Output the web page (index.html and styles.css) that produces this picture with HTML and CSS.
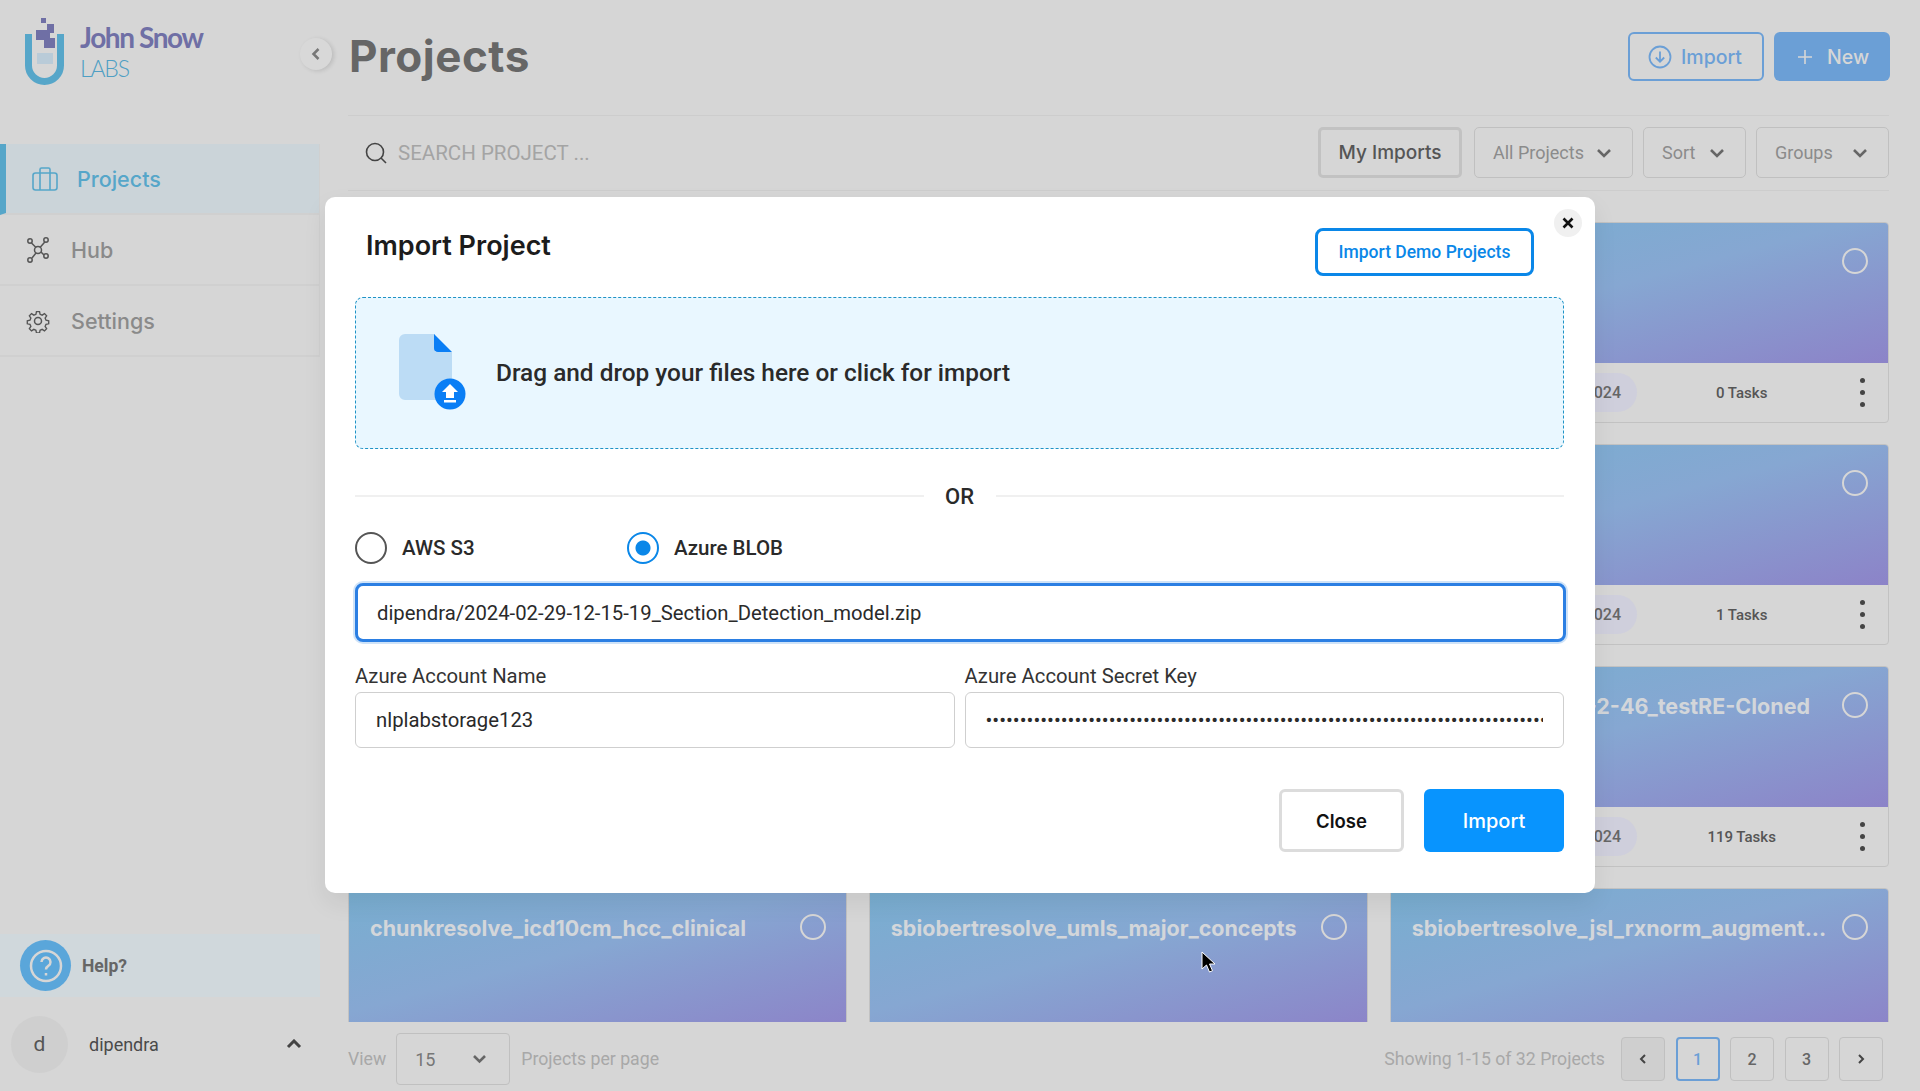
FILE: index.html
```html
<!DOCTYPE html>
<html lang="en">
<head>
<meta charset="utf-8">
<title>Projects</title>
<link rel="stylesheet" href="styles.css">
</head>
<body>
<div class="app">
  <aside class="sidebar">
    <div class="brand">
      <svg class="brand-mark" width="42" height="70" viewBox="0 0 42 70">
        <path d="M4.500 17v31.500a16 16 0 0 0 32 0V17" fill="none" stroke="#56a6c9" stroke-width="7"/>
        <path d="M23 7h7v9h-4v5h5v10H20v-8h-8V13h11z" fill="#6f6fa5"/>
        <rect x="17" y="1" width="5" height="5" fill="#6f6fa5"/>
        <rect x="13" y="36" width="16" height="11" fill="#b9cbd8"/>
      </svg>
      <div class="brand-text">
        <div class="brand-name">John Snow</div>
        <div class="brand-sub">LABS</div>
      </div>
    </div>
    <nav class="nav">
      <a class="nav-item nav-item-active">
        <svg width="26" height="24" viewBox="0 0 26 24" fill="none" stroke="#56a6c9" stroke-width="1.6"><rect x="1" y="6" width="24" height="17" rx="2.5"/><path d="M8 6V2.5A1.5 1.5 0 0 1 9.500 1h7A1.500 1.500 0 0 1 18 2.500V6M8 6v17M18 6v17"/></svg>
        <span>Projects</span>
      </a>
      <a class="nav-item">
        <svg width="24" height="26" viewBox="0 0 24 26" fill="none" stroke="#555" stroke-width="1.500"><circle cx="12" cy="13" r="3.500"/><circle cx="4" cy="4" r="2.200"/><circle cx="20" cy="3" r="2.200"/><circle cx="4" cy="23" r="2.200"/><circle cx="20" cy="19" r="2.200"/><path d="M5.500 6 10 10.500M18.800 5 14 10.500M6 21l4-5M18 18l-3-3"/></svg>
        <span>Hub</span>
      </a>
      <a class="nav-item">
        <svg width="24" height="24" viewBox="0 0 24 24" fill="none" stroke="#555" stroke-width="1.500"><circle cx="12" cy="12" r="3.500"/><path d="M10.300 1.500h3.400l.6 3 2.300 1 2.600-1.700 2.400 2.400-1.700 2.600 1 2.300 3 .6v3.400l-3 .6-1 2.300 1.700 2.600-2.400 2.400-2.600-1.700-2.300 1-.6 3h-3.400l-.6-3-2.300-1-2.600 1.700-2.400-2.400 1.700-2.600-1-2.300-3-.6v-3.400l3-.6 1-2.300-1.700-2.600 2.400-2.400 2.600 1.700 2.300-1z" transform="translate(1.200 1.200) scale(.9)"/></svg>
        <span>Settings</span>
      </a>
    </nav>
    <div class="help">
      <span class="help-badge">
        <svg width="36" height="36" viewBox="0 0 36 36" fill="none" stroke="#d6d6d6" stroke-width="2.500"><circle cx="18" cy="18" r="15"/><path d="M13.500 14a4.500 4.500 0 1 1 6.800 3.900c-1.500.9-2.300 1.800-2.300 3.600"/><path d="M18 25v2.500"/></svg>
      </span>
      <span class="help-label">Help?</span>
    </div>
    <div class="user">
      <span class="avatar">d</span>
      <span class="user-name">dipendra</span>
      <svg class="user-chevron" width="16" height="10" viewBox="0 0 16 10" fill="none" stroke="#444" stroke-width="3"><path d="M2 8l6-6 6 6"/></svg>
    </div>
  </aside>

  <main class="main">
    <header class="topbar">
      <span class="collapse">
        <svg width="10" height="14" viewBox="0 0 10 14" fill="none" stroke="#777" stroke-width="2.500"><path d="M7.500 2 2.500 7l5 5"/></svg>
      </span>
      <h1 class="page-title">Projects</h1>
      <div class="topbar-actions">
        <button class="btn-outline">
          <svg width="24" height="24" viewBox="0 0 24 24" fill="none" stroke="#6b9fd6" stroke-width="1.800"><circle cx="12" cy="12" r="10.500"/><path d="M12 6.500v10M7.800 12.500l4.200 4.200 4.200-4.200"/></svg>
          Import
        </button>
        <button class="btn-solid">
          <svg width="16" height="16" viewBox="0 0 16 16" fill="none" stroke="#d6d6d6" stroke-width="1.600"><path d="M8 1v14M1 8h14"/></svg>
          New
        </button>
      </div>
    </header>

    <div class="toolbar">
      <svg class="search-icon" width="22" height="22" viewBox="0 0 22 22" fill="none" stroke="#444" stroke-width="1.600"><circle cx="10" cy="10" r="8.500"/><path d="M16 16l5 5"/></svg>
      <span class="search-text">SEARCH PROJECT ...</span>
      <button class="btn-filter btn-filter-strong">My Imports</button>
      <button class="btn-filter btn-all">All Projects <svg width="16" height="10" viewBox="0 0 16 10" fill="none" stroke="#666" stroke-width="2.600"><path d="M2 2l6 6 6-6"/></svg></button>
      <button class="btn-filter btn-sort">Sort <svg width="16" height="10" viewBox="0 0 16 10" fill="none" stroke="#666" stroke-width="2.600"><path d="M2 2l6 6 6-6"/></svg></button>
      <button class="btn-filter btn-groups">Groups <svg width="16" height="10" viewBox="0 0 16 10" fill="none" stroke="#666" stroke-width="2.600"><path d="M2 2l6 6 6-6"/></svg></button>
    </div>

    <div class="grid-clip">
      <div class="grid">
        <article class="card"><div class="card-top"></div><div class="card-foot"></div></article>
        <article class="card"><div class="card-top"></div><div class="card-foot"></div></article>
        <article class="card">
          <div class="card-top"><span class="ring"></span></div>
          <div class="card-foot"><span class="pill">2024</span><span class="tasks">0 Tasks</span><span class="kebab"><i></i><i></i><i></i></span></div>
        </article>
        <article class="card"><div class="card-top"></div><div class="card-foot"></div></article>
        <article class="card"><div class="card-top"></div><div class="card-foot"></div></article>
        <article class="card">
          <div class="card-top"><span class="ring"></span></div>
          <div class="card-foot"><span class="pill">2024</span><span class="tasks">1 Tasks</span><span class="kebab"><i></i><i></i><i></i></span></div>
        </article>
        <article class="card"><div class="card-top"></div><div class="card-foot"></div></article>
        <article class="card"><div class="card-top"></div><div class="card-foot"></div></article>
        <article class="card">
          <div class="card-top"><span class="card-title card-title-right">-2-46_testRE-Cloned</span><span class="ring"></span></div>
          <div class="card-foot"><span class="pill">2024</span><span class="tasks">119 Tasks</span><span class="kebab"><i></i><i></i><i></i></span></div>
        </article>
        <article class="card">
          <div class="card-top"><span class="card-title">chunkresolve_icd10cm_hcc_clinical</span><span class="ring"></span></div>
        </article>
        <article class="card">
          <div class="card-top"><span class="card-title">sbiobertresolve_umls_major_concepts</span><span class="ring"></span></div>
        </article>
        <article class="card">
          <div class="card-top"><span class="card-title">sbiobertresolve_jsl_rxnorm_augment...</span><span class="ring"></span></div>
        </article>
      </div>
    </div>

    <footer class="pager-bar">
      <span class="muted">View</span>
      <span class="per-page">15 <svg width="15" height="10" viewBox="0 0 15 10" fill="none" stroke="#666" stroke-width="2.600"><path d="M2 2l5.500 5.500L13 2"/></svg></span>
      <span class="muted">Projects per page</span>
      <span class="muted showing">Showing 1-15 of 32 Projects</span>
      <span class="page-btn page-btn-off"><svg width="8" height="12" viewBox="0 0 8 12" fill="none" stroke="#444" stroke-width="2"><path d="M6 2 2 6l4 4"/></svg></span>
      <span class="page-btn page-btn-current">1</span>
      <span class="page-btn">2</span>
      <span class="page-btn">3</span>
      <span class="page-btn"><svg width="8" height="12" viewBox="0 0 8 12" fill="none" stroke="#444" stroke-width="2"><path d="M2 2l4 4-4 4"/></svg></span>
    </footer>
  </main>
</div>

<section class="modal">
  <button class="modal-x">
    <svg width="12" height="12" viewBox="0 0 12 12" fill="none" stroke="#111" stroke-width="2.600"><path d="M1.500 1.500l9 9M10.500 1.500l-9 9"/></svg>
  </button>
  <div class="modal-head">
    <h2 class="modal-title">Import Project</h2>
    <button class="btn-demo">Import Demo Projects</button>
  </div>
  <div class="dropzone">
    <svg class="file-icon" width="68" height="82" viewBox="0 0 68 82">
      <path d="M6 0h30v18h17v48H6a6 6 0 0 1-6-6V6a6 6 0 0 1 6-6z" fill="#bcdcf5"/>
      <path d="M35 0l18 18H39a4 4 0 0 1-4-4z" fill="#0a7ef5"/>
      <circle cx="51" cy="60" r="15.500" fill="#0a7ef5"/>
      <path d="M51 50l8 8h-4v6h-8v-6h-4z" fill="#fff"/>
      <rect x="45" y="66" width="12" height="2.500" fill="#fff"/>
    </svg>
    <span class="drop-text">Drag and drop your files here or click for import</span>
  </div>
  <div class="or-row"><span class="or-line"></span><span class="or-text">OR</span><span class="or-line"></span></div>
  <div class="radios">
    <label class="radio radio-aws"><span class="radio-dot"></span>AWS S3</label>
    <label class="radio"><span class="radio-dot radio-dot-on"></span>Azure BLOB</label>
  </div>
  <input class="field field-focus" type="text" readonly value="dipendra/2024-02-29-12-15-19_Section_Detection_model.zip">
  <div class="field-row">
    <div class="field-col">
      <label class="field-label">Azure Account Name</label>
      <input class="field" type="text" readonly value="nlplabstorage123">
    </div>
    <div class="field-col">
      <label class="field-label">Azure Account Secret Key</label>
      <input class="field" type="password" readonly value="xxxxxxxxxxxxxxxxxxxxxxxxxxxxxxxxxxxxxxxxxxxxxxxxxxxxxxxxxxxxxxxxxxxxxxxxxxxxxxxxxxxxxxxxxxxxxxxxxxxx">
    </div>
  </div>
  <div class="modal-actions">
    <button class="btn-close">Close</button>
    <button class="btn-import">Import</button>
  </div>
</section>

<svg class="cursor" width="16" height="23" viewBox="0 0 16 23"><path d="M1 1v17l4.500-4 3 7 3-1.300-3-6.700H14z" fill="#000" stroke="#fff" stroke-width="1"/></svg>
</body>
</html>
```

FILE: styles.css
```css
* { box-sizing: border-box; }
html, body { margin: 0; height: 100%; overflow: hidden; }
body { background: #d6d6d6; font-family: Roboto, "Liberation Sans", sans-serif; color: #444; }
button { font-family: inherit; cursor: pointer; }
h1, h2 { margin: 0; }

.app { display: flex; height: 1091px; }

/* Sidebar */
.sidebar { width: 320px; flex: none; display: flex; flex-direction: column; }
.brand { height: 144px; padding: 17px 0 0 24px; display: flex; align-items: flex-start; gap: 14px; }
.brand-mark { flex: none; }
.brand-text { padding-top: 4px; }
.brand-name { font-family: Lato, sans-serif; font-weight: 700; font-size: 28px; line-height: 32px; letter-spacing: -1.400px; color: #6f6fa5; }
.brand-sub { font-family: Lato, sans-serif; font-weight: 300; font-size: 23px; line-height: 30px; letter-spacing: -1.200px; color: #4f9fc4; }
.nav { border-right: 1px solid #d0d0d0; }
.nav-item { display: flex; align-items: center; gap: 21px; height: 71px; padding-left: 26px; border-bottom: 2px solid #d0d0d0; font-family: Inter, sans-serif; font-weight: 500; font-size: 21.500px; color: #8a8a8a; }
.nav-item-active { gap: 19px; background: #cbd4d9; border-left: 6px solid #56a6c9; color: #56a6c9; }
.help { margin-top: auto; height: 63px; background: #d0d8dc; display: flex; align-items: center; gap: 11px; padding-left: 20px; }
.help-badge { width: 51px; height: 51px; border-radius: 50%; background: #5aa6da; display: flex; align-items: center; justify-content: center; }
.help-label { font-weight: 700; font-size: 17.500px; color: #666; }
.user { height: 94px; display: flex; align-items: center; padding: 0 17px 0 11px; }
.avatar { width: 57px; height: 57px; border-radius: 50%; background: #cfcfcf; display: flex; align-items: center; justify-content: center; font-size: 21px; color: #555; }
.user-name { margin-left: 21px; font-size: 18px; color: #4a4a4a; }
.user-chevron { margin-left: auto; margin-right: 1px; }

/* Main */
.main { flex: 1; min-width: 0; display: flex; flex-direction: column; padding: 0 31px 0 28px; }
.topbar { height: 116px; flex: none; display: flex; align-items: flex-start; border-bottom: 1px solid #cdcdcd; position: relative; }
.collapse { position: absolute; left: -48px; top: 38px; width: 32px; height: 32px; border-radius: 50%; background: #d8d8d8; box-shadow: 2px 1px 4px rgba(0,0,0,.12); display: flex; align-items: center; justify-content: center; }
.page-title { margin: 30px 0 0 1px; font-family: Inter, sans-serif; font-weight: 700; font-size: 44px; line-height: 52px; letter-spacing: .5px; color: #666; }
.topbar-actions { margin: 32px -1px 0 auto; display: flex; gap: 10px; }
.btn-outline, .btn-solid { height: 49px; border-radius: 6px; display: flex; align-items: center; font-family: Inter, sans-serif; font-weight: 500; font-size: 19.500px; }
.btn-outline { width: 136px; gap: 9px; padding: 0 0 0 18px; background: transparent; border: 2.500px solid #6b9fd6; color: #6b9fd6; }
.btn-solid { width: 116px; gap: 14px; padding: 0 0 0 23px; background: #6b9fd6; border: 0; color: #d6d6d6; }

.toolbar { height: 75px; flex: none; display: flex; align-items: center; border-bottom: 1px solid #cdcdcd; padding: 0 0 1px 0; }
.search-icon { margin-left: 17px; flex: none; }
.search-text { margin-left: 11px; margin-right: auto; font-size: 20.500px; color: #a4a4a4; }
.btn-filter { height: 51px; border-radius: 5px; background: transparent; border: 1.500px solid #c0c0c0; display: flex; align-items: center; justify-content: space-between; font-size: 18px; color: #8b8b8b; padding: 0 20px 0 18px; margin-left: 11px; }
.btn-filter-strong { width: 144px; margin-left: 0; padding: 0; justify-content: center; border: 3px solid #c2c2c2; font-family: Inter, sans-serif; font-weight: 500; font-size: 19px; color: #555; }
.btn-all { width: 159px; margin-left: 12px; }
.btn-sort { width: 103px; margin-left: 10px; }
.btn-groups { width: 133px; margin-left: 10px; }

.grid-clip { flex: 1; min-height: 0; overflow: hidden; padding-top: 31px; }
.grid { display: grid; grid-template-columns: repeat(3, 1fr); gap: 21px 21.500px; }
.card { height: 201px; display: flex; flex-direction: column; border: 1.500px solid #c2c2c2; border-radius: 4px; overflow: hidden; }
.card-top { height: 140px; flex: none; background: linear-gradient(165deg, #78aed0 0%, #86a7d2 45%, #8c83c8 100%); display: flex; align-items: flex-start; padding: 26px 20px 0 21px; }
.card-title { font-family: Inter, sans-serif; font-weight: 700; font-size: 21.500px; line-height: 26px; color: #d3d6da; white-space: nowrap; }
.card-title-right { margin-left: auto; margin-right: 32px; }
.ring { width: 26px; height: 26px; margin: -1px 0 0 auto; border-radius: 50%; border: 2px solid #d6d6d6; flex: none; }
.card-title-right + .ring { margin-left: 0; }
.card-foot { flex: 1; display: flex; align-items: center; padding: 0 23px 0 0; position: relative; }
.pill { height: 39px; padding: 0 16px; border-radius: 20px; background: #cfcfdc; display: flex; align-items: center; font-size: 16px; font-weight: 500; color: #666; position: absolute; right: 251px; }
.tasks { width: 140px; margin-left: 281px; text-align: center; font-size: 15px; font-weight: 500; color: #555; }
.kebab { margin-left: auto; display: flex; flex-direction: column; gap: 7px; }
.kebab i { display: block; width: 5px; height: 5px; border-radius: 50%; background: #444; }

.pager-bar { height: 69px; flex: none; display: flex; align-items: center; padding: 0 6px 0 0; }
.muted { font-size: 17.700px; color: #a8a8a8; }
.per-page { width: 114px; height: 52px; margin: 5px 11px 0 10px; border: 1.500px solid #c0c0c0; border-radius: 4px; display: flex; align-items: center; justify-content: space-between; padding: 0 22px 0 18px; font-size: 18px; color: #777; }
.pager-bar .muted { margin-top: 4px; }
.showing { margin-left: auto; margin-right: 16px; }
.page-btn { width: 44px; height: 44px; margin: 5px 0 0 10.500px; border: 1.500px solid #c0c0c0; border-radius: 4px; display: flex; align-items: center; justify-content: center; font-size: 16px; font-weight: 500; color: #666; }
.page-btn-off { background: #cfcfcf; margin-left: 0; }
.page-btn-current { border: 2px solid #6b9fd6; color: #6b9fd6; }

/* Modal */
.modal { position: absolute; left: 325px; top: 197px; width: 1270px; height: 696px; padding: 0 31px 0 30px; background: #fff; border-radius: 10px; box-shadow: 0 10px 24px rgba(0,0,0,.07); color: #222; }
.modal-x { position: absolute; right: 13px; top: 12px; width: 28px; height: 28px; padding: 0; border: 0; border-radius: 50%; background: #f0f0f0; display: flex; align-items: center; justify-content: center; }
.modal-head { height: 100px; display: flex; align-items: flex-start; justify-content: space-between; padding: 0 30px 0 11px; }
.modal-title { margin-top: 31px; font-family: Inter, sans-serif; font-weight: 600; font-size: 27px; line-height: 36px; color: #1c1c1c; }
.btn-demo { margin-top: 31px; width: 219px; height: 48px; background: #fff; border: 3px solid #0a87e8; border-radius: 8px; font-size: 17.500px; font-weight: 500; color: #0a87e8; }
.dropzone { height: 152px; display: flex; align-items: center; padding-left: 43px; background: #e9f7ff; border: 1px dashed #1f93c6; border-radius: 8px; }
.file-icon { flex: none; margin-top: 4px; }
.drop-text { margin: 0 0 2px 29px; font-size: 24.400px; font-weight: 500; color: #2a2a2a; }
.or-row { margin-top: 32px; height: 30px; display: flex; align-items: center; }
.or-line { flex: 1; height: 2px; background: #f0f0f0; }
.or-text { width: 72px; text-align: center; font-size: 22px; font-weight: 500; color: #2a2a2a; }
.radios { margin-top: 21px; height: 32px; display: flex; }
.radio { display: flex; align-items: center; gap: 15px; font-size: 20.500px; font-weight: 500; color: #2a2a2a; }
.radio-aws { width: 272px; }
.radio-dot { width: 32px; height: 32px; flex: none; border-radius: 50%; border: 2.500px solid #555; }
.radio-dot-on { border-color: #0a87e8; background: radial-gradient(circle, #0a87e8 0 7px, #fff 8px); }
.field { display: block; width: 100%; height: 56px; padding: 0 20px; border: 1.500px solid #cfcfcf; border-radius: 6px; background: #fff; font-family: Roboto, sans-serif; font-size: 20.300px; color: #2a2a2a; outline: none; }
.field-focus { width: calc(100% + 2px); height: 59px; margin-top: 19px; border: 3px solid #2b7fe3; border-radius: 8px; box-shadow: 0 0 0 2px #cfe3f8; padding: 0 19px; }
.field-row { margin-top: 22px; display: grid; grid-template-columns: 1fr 1fr; gap: 10px; }
.field-label { display: block; font-size: 20.300px; line-height: 24px; margin-bottom: 4px; color: #333; }
.modal-actions { margin-top: 41px; display: flex; justify-content: flex-end; gap: 20px; }
.btn-close, .btn-import { height: 63px; border-radius: 6px; font-family: Inter, sans-serif; font-weight: 600; font-size: 18.500px; }
.btn-close { width: 125px; background: #fff; border: 3px solid #dcdcdc; color: #111; }
.btn-import { width: 140px; background: #0894fe; border: 0; color: #fff; font-size: 20px; font-weight: 500; }

.cursor { position: absolute; left: 1201px; top: 951px; }
```
